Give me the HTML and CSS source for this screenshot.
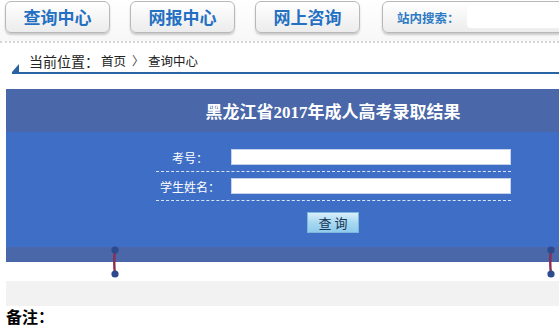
FILE: index.html
```html
<!DOCTYPE html>
<html lang="zh">
<head>
<meta charset="utf-8">
<title>查询中心</title>
<link rel="stylesheet" href="styles.css">
</head>
<body>
<header class="top">
  <nav class="nav">
    <a class="nav-btn" href="#">查询中心</a>
    <a class="nav-btn" href="#">网报中心</a>
    <a class="nav-btn" href="#">网上咨询</a>
    <div class="search">
      <span class="search-label">站内搜索：</span>
      <input class="search-input" type="text">
    </div>
  </nav>
</header>
<div class="page">
  <div class="crumb">
    <span class="tri"></span>
    <span class="crumb-main">当前位置：</span>
    <span class="crumb-link">首页</span>
    <span class="crumb-sep">〉</span>
    <span class="crumb-link">查询中心</span>
  </div>
  <div class="panel-wrap">
    <div class="panel">
      <div class="panel-head"><h1 class="title">黑龙江省2017年成人高考录取结果</h1></div>
      <form class="panel-body">
        <div class="row"><label class="lbl">考号：</label><input class="field" type="text"></div>
        <div class="row"><label class="lbl">学生姓名：</label><input class="field" type="text"></div>
        <div class="actions"><button class="btn" type="button">查 询</button></div>
      </form>
      <div class="panel-foot"></div>
    </div>
    <div class="spacer"></div>
    <svg class="pin pin-left" width="12" height="32" viewBox="0 0 12 32"><path d="M6 4 Q4.5 16 6 28" stroke="#8a2d4f" stroke-width="2.4" fill="none"/><circle cx="6" cy="4" r="3.6" fill="#2c4a8c"/><circle cx="6" cy="28" r="3.6" fill="#2c4a8c"/></svg>
    <svg class="pin pin-right" width="12" height="32" viewBox="0 0 12 32"><path d="M6 4 Q4.5 16 6 28" stroke="#8a2d4f" stroke-width="2.4" fill="none"/><circle cx="6" cy="4" r="3.6" fill="#2c4a8c"/><circle cx="6" cy="28" r="3.6" fill="#2c4a8c"/></svg>
  </div>
  <div class="gray"></div>
  <div class="note">备注：</div>
</div>
</body>
</html>
```
FILE: styles.css
```css
html, body {
  margin: 0;
  padding: 0;
  overflow: hidden;
  background: #fff;
  font-family: "Noto Sans CJK SC", "Liberation Sans", sans-serif;
}
.top {
  height: 41px;
  background: linear-gradient(#ffffff, #f7f7f7);
  border-bottom: 2px dotted #d6d6d6;
}
.nav {
  display: flex;
  gap: 20px;
  padding: 1px 0 0 5px;
  width: 700px;
}
.nav-btn {
  box-sizing: border-box;
  width: 105px;
  height: 32px;
  border: 1px solid #b8b8b8;
  border-radius: 6px;
  background: linear-gradient(#ffffff, #ececec);
  box-shadow: 0 2px 2px rgba(0, 0, 0, 0.18);
  display: flex;
  align-items: center;
  justify-content: center;
  padding-bottom: 2px;
  color: #2470c2;
  font-weight: bold;
  font-size: 17px;
  text-decoration: none;
  line-height: 1;
}
.search {
  box-sizing: border-box;
  margin-left: 2px;
  width: 300px;
  height: 32px;
  border: 1px solid #b8b8b8;
  border-radius: 6px;
  background: linear-gradient(#ffffff, #ececec);
  box-shadow: 0 2px 2px rgba(0, 0, 0, 0.18);
  display: flex;
  align-items: center;
  padding-left: 14px;
}
.search-label {
  color: #2f7bc4;
  font-weight: bold;
  font-size: 12.5px;
  width: 70px;
}
.search-input {
  box-sizing: border-box;
  height: 22px;
  width: 200px;
  border: none;
  border-radius: 4px;
  background: #fff;
}
.page {
  margin-left: 6px;
  width: 654px;
}
.crumb {
  height: 28px;
  display: flex;
  align-items: flex-end;
  gap: 4px;
  border-bottom: 2px solid #2a63a4;
  margin-left: 6px;
  padding-bottom: 1px;
  color: #222;
  font-size: 12.5px;
  line-height: 20px;
}
.tri {
  width: 0;
  height: 0;
  border-left: 7px solid transparent;
  border-bottom: 8px solid #2a63a4;
  margin-bottom: -1px;
  margin-right: 6px;
  align-self: flex-end;
}
.crumb-main {
  font-size: 14px;
  margin-right: -2px;
}
.crumb-sep {
  margin: 0 0 0 2px;
  font-size: 12px;
  color: #444;
}
.panel-wrap {
  position: relative;
  margin-top: 15px;
}
.panel-head {
  height: 43px;
  background: #4a67a9;
  display: flex;
  align-items: center;
  justify-content: center;
}
.title {
  margin: 0;
  color: #fff;
  font-family: "Liberation Serif", "Noto Sans CJK SC", serif;
  font-size: 17px;
  font-weight: bold;
}
.panel-body {
  margin: 0;
  height: 115px;
  box-sizing: border-box;
  padding-top: 11px;
  background: #3f6ec6;
  display: flex;
  flex-direction: column;
  align-items: center;
}
.row {
  width: 355px;
  height: 28px;
  border-bottom: 1px dashed #d9e4f6;
  display: grid;
  grid-template-columns: 69px 280px;
  column-gap: 6px;
  align-items: center;
}
.lbl {
  color: #fff;
  font-size: 12px;
  text-align: center;
}
.field {
  box-sizing: border-box;
  height: 16px;
  width: 280px;
  border: 1px solid #c5d2ea;
  background: #fff;
  margin: 0;
}
.actions {
  margin-top: 8px;
}
.btn {
  box-sizing: border-box;
  width: 52px;
  height: 21px;
  border: 1px solid #7fb6de;
  background: linear-gradient(#d7effb, #a9d8f1 50%, #8fcbec);
  color: #173654;
  font-size: 13px;
  font-family: "Noto Sans CJK SC", sans-serif;
  padding: 0;
  line-height: 1;
}
.panel-foot {
  height: 15px;
  background: #4a67a9;
}
.spacer {
  height: 19px;
}
.pin {
  position: absolute;
  top: 157px;
}
.pin-left { left: 103px; }
.pin-right { left: 539px; }
.gray {
  height: 25px;
  background: #f2f2f2;
}
.note {
  margin-left: -6px;
  padding-left: 6px;
  font-weight: bold;
  font-size: 16px;
  color: #000;
  line-height: 20px;
}
```
